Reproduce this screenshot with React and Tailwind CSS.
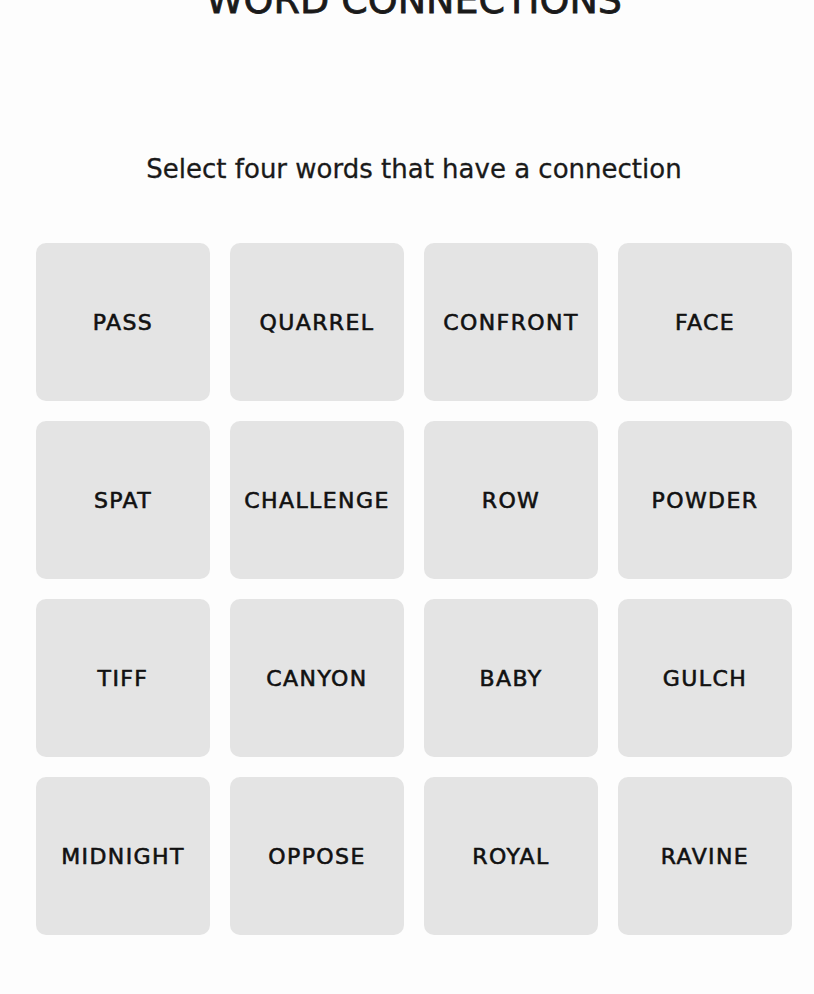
import React from "react"

const words = [
  "PASS", "QUARREL", "CONFRONT", "FACE",
  "SPAT", "CHALLENGE", "ROW", "POWDER",
  "TIFF", "CANYON", "BABY", "GULCH",
  "MIDNIGHT", "OPPOSE", "ROYAL", "RAVINE",
]

const Tile = ({ word }) => (
  <button className="h-[158px] rounded-[10px] bg-[#e4e4e4] flex items-center justify-center text-[22px] tracking-[1.4px] text-[#111] [-webkit-text-stroke:0.6px_#111]">
    {word}
  </button>
)

export default function App() {
  return (
    <div
      className="min-h-screen bg-[#fdfdfd] text-[#1a1a1a] overflow-hidden"
      style={{ fontFamily: '"DejaVu Sans", sans-serif' }}
    >
      <div className="ml-[36px] w-[756px]">
        <h1 className="mt-[-20px] text-center text-[38px] leading-[40px] [-webkit-text-stroke:0.8px_#1a1a1a]">
          WORD CONNECTIONS
        </h1>
        <p className="mt-[134px] text-center text-[26px] leading-[30px] [-webkit-text-stroke:0.3px_#1a1a1a]">
          Select four words that have a connection
        </p>
        <div className="mt-[59px] grid grid-cols-[repeat(4,174px)] gap-x-[20px] gap-y-[20px]">
          {words.map((w) => (
            <Tile key={w} word={w} />
          ))}
        </div>
      </div>
    </div>
  )
}
